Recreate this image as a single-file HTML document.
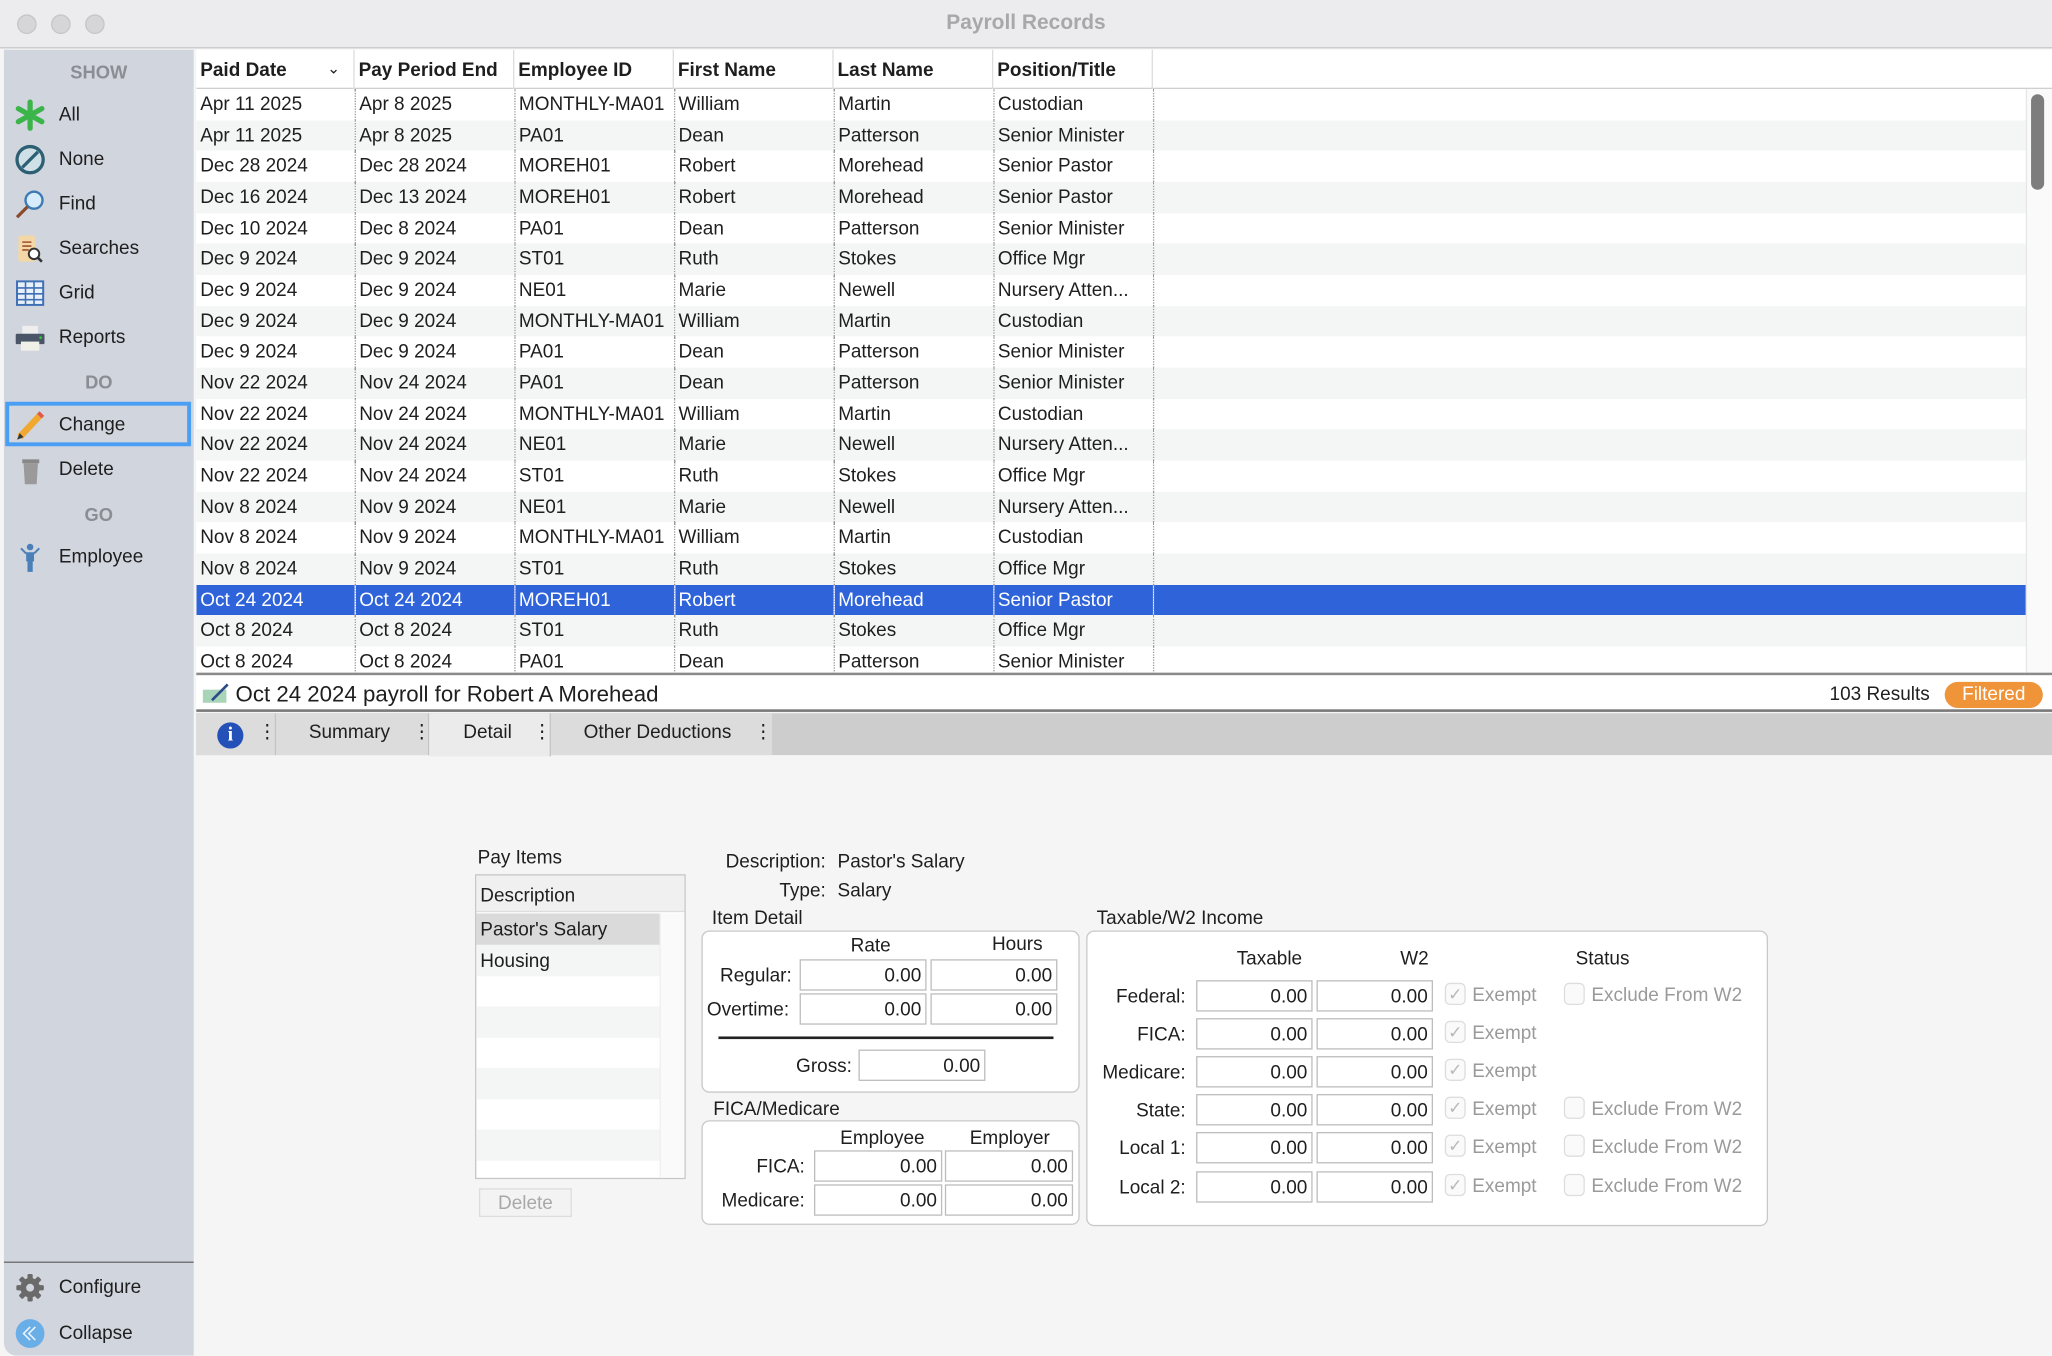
<!DOCTYPE html>
<html><head><meta charset="utf-8"><style>
*{box-sizing:border-box;margin:0;padding:0}
html,body{width:2052px;height:1356px;overflow:hidden;background:#fff}
#w{position:absolute;left:0;top:0;width:1568px;height:1036px;transform:scale(1.30867);transform-origin:0 0;font-family:"Liberation Sans",sans-serif;font-size:14.5px;color:#1e1e1e;background:#f5f5f5;overflow:hidden}
.a{position:absolute;white-space:nowrap}
#title{left:0;top:0;width:1568px;height:37px;background:#ecebee;border-bottom:1px solid #c8c8c8;text-align:center;line-height:36px;font-weight:bold;color:#a8a8a8;font-size:16px}
.dot{position:absolute;top:11px;width:15px;height:15px;border-radius:50%;background:#d6d5d8;border:1px solid #c6c5c8}
#side{left:3px;top:38px;width:145px;height:998px;background:#d1d5de;border-bottom-left-radius:10px}
.sh{position:absolute;width:145px;text-align:center;font-weight:bold;color:#8a8d94;font-size:14px;margin-top:1px}
.si{position:absolute;left:42px;font-size:14.5px;color:#1e1e1e;margin-top:1px}
.ic{position:absolute;left:8px;width:24px;height:24px}
#grid{left:150px;top:38px;width:1418px;height:477px;background:#fff;overflow:hidden}
table{border-collapse:collapse;table-layout:fixed;position:absolute;left:0;top:30px}
td{height:23.65px;padding:2px 3px 0;overflow:hidden;white-space:nowrap;border-right:1px dotted #999;line-height:21.65px}
tr:nth-child(even) td{background:#f4f5f5}
tr.sel td{background:#2f63d9;color:#fff;border-right-color:#8fa9ea}
tr td:last-child{border-right:none}
.hd{position:absolute;top:0;height:30px;line-height:33px;font-weight:bold;padding-left:3px;border-right:1px solid #ddd}
.box{position:absolute;border:1px solid #c9c9c9;border-radius:6px;background:#fff}
.f{position:absolute;height:24px;border:1px solid #bdbdbd;background:#fff;text-align:right;padding-right:3px;line-height:24px}
.r{position:absolute;text-align:right}
.g{color:#9a9a9a}
.cb{position:absolute;width:16px;height:17px;border:1px solid #ddd;border-radius:4px;background:#fafafa;color:#b8b8b8;font-size:13px;line-height:15px;text-align:center}
</style></head><body><div id="w">
<div id="title" class="a">Payroll Records</div>
<div class="dot" style="left:13px"></div><div class="dot" style="left:39px"></div><div class="dot" style="left:65px"></div>

<div id="side" class="a">
<div class="sh" style="top:8px">SHOW</div>
<svg class="ic" style="top:38px" viewBox="0 0 24 24"><g stroke="#3bb54a" stroke-width="4" stroke-linecap="round"><line x1="12" y1="2" x2="12" y2="22"/><line x1="3" y1="7" x2="21" y2="17"/><line x1="3" y1="17" x2="21" y2="7"/></g></svg>
<div class="si" style="top:41px">All</div>
<svg class="ic" style="top:72px" viewBox="0 0 24 24"><circle cx="12" cy="12" r="10" fill="#cfe0e6" stroke="#2c5f73" stroke-width="2.5"/><line x1="6" y1="18" x2="18" y2="6" stroke="#2c5f73" stroke-width="2.5"/></svg>
<div class="si" style="top:75px">None</div>
<svg class="ic" style="top:106px" viewBox="0 0 24 24"><circle cx="15" cy="9" r="6.5" fill="#d6ecfa" stroke="#3d79b5" stroke-width="1.8"/><line x1="10" y1="14" x2="2" y2="22" stroke="#8a4b2d" stroke-width="2.5"/></svg>
<div class="si" style="top:109px">Find</div>
<svg class="ic" style="top:140px" viewBox="0 0 24 24"><rect x="3" y="2" width="13" height="20" rx="2" fill="#f3d7a6"/><g stroke="#a0522d" stroke-width="1.2"><line x1="6" y1="7" x2="13" y2="7"/><line x1="6" y1="10" x2="13" y2="10"/><line x1="6" y1="13" x2="11" y2="13"/></g><circle cx="15" cy="16" r="4" fill="#fff" stroke="#333" stroke-width="1.5"/><line x1="18" y1="19" x2="21" y2="22" stroke="#333" stroke-width="2"/></svg>
<div class="si" style="top:143px">Searches</div>
<svg class="ic" style="top:174px" viewBox="0 0 24 24"><rect x="2" y="3" width="20" height="18" fill="#e8f0fb" stroke="#3f6fb5" stroke-width="1.5"/><g stroke="#3f6fb5" stroke-width="1.2"><line x1="2" y1="8" x2="22" y2="8"/><line x1="2" y1="12.5" x2="22" y2="12.5"/><line x1="2" y1="17" x2="22" y2="17"/><line x1="8.5" y1="3" x2="8.5" y2="21"/><line x1="15" y1="3" x2="15" y2="21"/></g></svg>
<div class="si" style="top:177px">Grid</div>
<svg class="ic" style="top:208px" viewBox="0 0 24 24"><rect x="6" y="3" width="12" height="6" fill="#eee"/><rect x="1" y="9" width="22" height="8" rx="1" fill="#4a5668"/><rect x="5" y="15" width="14" height="7" fill="#f0f0e8"/><circle cx="20" cy="12" r="1" fill="#3c3"/></svg>
<div class="si" style="top:211px">Reports</div>
<div class="sh" style="top:245px">DO</div>
<div style="position:absolute;left:1px;top:269px;width:142px;height:34px;border:3px solid #4a9ff5"></div>
<svg class="ic" style="top:275px" viewBox="0 0 24 24"><line x1="4" y1="21" x2="19" y2="5" stroke="#f0a830" stroke-width="5"/><line x1="19" y1="5" x2="21" y2="3" stroke="#e05a4a" stroke-width="5"/><path d="M2 23l2-5 3 3z" fill="#333"/></svg>
<div class="si" style="top:278px">Change</div>
<svg class="ic" style="top:309px" viewBox="0 0 24 24"><rect x="6" y="4" width="13" height="3" fill="#888"/><path d="M7 7h11l-1 16h-9z" fill="#9a9a9a"/></svg>
<div class="si" style="top:312px">Delete</div>
<div class="sh" style="top:346px">GO</div>
<svg class="ic" style="top:376px" viewBox="0 0 24 24"><circle cx="12" cy="4" r="2.5" fill="#4a7fb8"/><path d="M9 8h6v7h-1v8h-4v-8h-1z" fill="#4a7fb8"/><line x1="5" y1="5" x2="9" y2="9" stroke="#4a7fb8" stroke-width="1.5"/><line x1="19" y1="5" x2="15" y2="9" stroke="#4a7fb8" stroke-width="1.5"/></svg>
<div class="si" style="top:379px">Employee</div>
<div style="position:absolute;left:0;top:926px;width:145px;height:1px;background:#6b6b6b"></div>
<svg class="ic" style="top:934px" viewBox="0 0 24 24"><g fill="#6a6a6a"><circle cx="12" cy="12" r="7.5"/><rect x="10" y="1.5" width="4" height="21" rx="1"/><rect x="1.5" y="10" width="21" height="4" rx="1"/><rect x="10" y="1.5" width="4" height="21" rx="1" transform="rotate(45 12 12)"/><rect x="10" y="1.5" width="4" height="21" rx="1" transform="rotate(-45 12 12)"/></g><circle cx="12" cy="12" r="3" fill="#d1d5de"/></svg>
<div class="si" style="top:937px">Configure</div>
<svg class="ic" style="top:969px" viewBox="0 0 24 24"><circle cx="12" cy="12" r="11" fill="#6aaee8"/><path d="M12 7l-5 5 5 5M16 7l-5 5 5 5" fill="none" stroke="#e8f3fc" stroke-width="1.2"/></svg>
<div class="si" style="top:972px">Collapse</div>
</div>

<div id="grid" class="a">
<div class="a" style="left:0;top:0;width:1418px;height:30px;background:#fff;border-bottom:1px solid #cfcfcf"></div>
<div class="hd" style="left:0;width:121px">Paid Date<span style="position:absolute;left:100px;top:-2px;font-weight:normal;font-size:12px">&#8964;</span></div>
<div class="hd" style="left:121px;width:122px">Pay Period End</div>
<div class="hd" style="left:243px;width:122px">Employee ID</div>
<div class="hd" style="left:365px;width:122px">First Name</div>
<div class="hd" style="left:487px;width:122px">Last Name</div>
<div class="hd" style="left:609px;width:122px">Position/Title</div>
<table style="width:1398px">
<colgroup><col style="width:121px"><col style="width:122px"><col style="width:122px"><col style="width:122px"><col style="width:122px"><col style="width:122px"><col></colgroup>
<tr><td>Apr 11 2025</td><td>Apr 8 2025</td><td>MONTHLY-MA01</td><td>William</td><td>Martin</td><td>Custodian</td><td></td></tr>
<tr><td>Apr 11 2025</td><td>Apr 8 2025</td><td>PA01</td><td>Dean</td><td>Patterson</td><td>Senior Minister</td><td></td></tr>
<tr><td>Dec 28 2024</td><td>Dec 28 2024</td><td>MOREH01</td><td>Robert</td><td>Morehead</td><td>Senior Pastor</td><td></td></tr>
<tr><td>Dec 16 2024</td><td>Dec 13 2024</td><td>MOREH01</td><td>Robert</td><td>Morehead</td><td>Senior Pastor</td><td></td></tr>
<tr><td>Dec 10 2024</td><td>Dec 8 2024</td><td>PA01</td><td>Dean</td><td>Patterson</td><td>Senior Minister</td><td></td></tr>
<tr><td>Dec 9 2024</td><td>Dec 9 2024</td><td>ST01</td><td>Ruth</td><td>Stokes</td><td>Office Mgr</td><td></td></tr>
<tr><td>Dec 9 2024</td><td>Dec 9 2024</td><td>NE01</td><td>Marie</td><td>Newell</td><td>Nursery Atten...</td><td></td></tr>
<tr><td>Dec 9 2024</td><td>Dec 9 2024</td><td>MONTHLY-MA01</td><td>William</td><td>Martin</td><td>Custodian</td><td></td></tr>
<tr><td>Dec 9 2024</td><td>Dec 9 2024</td><td>PA01</td><td>Dean</td><td>Patterson</td><td>Senior Minister</td><td></td></tr>
<tr><td>Nov 22 2024</td><td>Nov 24 2024</td><td>PA01</td><td>Dean</td><td>Patterson</td><td>Senior Minister</td><td></td></tr>
<tr><td>Nov 22 2024</td><td>Nov 24 2024</td><td>MONTHLY-MA01</td><td>William</td><td>Martin</td><td>Custodian</td><td></td></tr>
<tr><td>Nov 22 2024</td><td>Nov 24 2024</td><td>NE01</td><td>Marie</td><td>Newell</td><td>Nursery Atten...</td><td></td></tr>
<tr><td>Nov 22 2024</td><td>Nov 24 2024</td><td>ST01</td><td>Ruth</td><td>Stokes</td><td>Office Mgr</td><td></td></tr>
<tr><td>Nov 8 2024</td><td>Nov 9 2024</td><td>NE01</td><td>Marie</td><td>Newell</td><td>Nursery Atten...</td><td></td></tr>
<tr><td>Nov 8 2024</td><td>Nov 9 2024</td><td>MONTHLY-MA01</td><td>William</td><td>Martin</td><td>Custodian</td><td></td></tr>
<tr><td>Nov 8 2024</td><td>Nov 9 2024</td><td>ST01</td><td>Ruth</td><td>Stokes</td><td>Office Mgr</td><td></td></tr>
<tr class="sel"><td>Oct 24 2024</td><td>Oct 24 2024</td><td>MOREH01</td><td>Robert</td><td>Morehead</td><td>Senior Pastor</td><td></td></tr>
<tr><td>Oct 8 2024</td><td>Oct 8 2024</td><td>ST01</td><td>Ruth</td><td>Stokes</td><td>Office Mgr</td><td></td></tr>
<tr><td>Oct 8 2024</td><td>Oct 8 2024</td><td>PA01</td><td>Dean</td><td>Patterson</td><td>Senior Minister</td><td></td></tr>
</table>
<div class="a" style="left:1398px;top:30px;width:20px;height:447px;background:#fafafa;border-left:1px solid #e6e6e6"></div>
<div class="a" style="left:1402px;top:34px;width:10px;height:73px;border-radius:5px;background:#7d7d7d"></div>
</div>
<div class="a" style="left:150px;top:514px;width:1418px;height:2px;background:#8a8a8a"></div>
<div class="a" style="left:150px;top:516px;width:1418px;height:28px;background:#fff;border-bottom:2px solid #7a7a7a"></div>
<svg class="a" style="left:154px;top:521px" width="22" height="18" viewBox="0 0 22 18"><rect x="1" y="6" width="18" height="10" fill="#a8d4b8"/><line x1="8" y1="14" x2="20" y2="2" stroke="#2b4a8a" stroke-width="2"/></svg>
<div class="a" style="left:180px;top:521px;font-size:17px">Oct 24 2024 payroll for Robert A Morehead</div>
<div class="a" style="left:1398px;top:523px;font-size:14.5px">103 Results</div>
<div class="a" style="left:1486px;top:521px;width:75px;height:20px;border-radius:10px;background:#f0943a;color:#fff;text-align:center;line-height:21px;font-size:14.5px">Filtered</div>

<div class="a" style="left:150px;top:545px;width:1418px;height:32px;background:#cdcdcd"></div>
<div class="a" style="left:150px;top:545px;width:61px;height:32px;background:#dcdcdc;border-right:1px solid #c4c4c4"></div>
<div class="a" style="left:166px;top:552px;width:20px;height:20px;border-radius:50%;background:#2451b8;color:#fff;font-weight:bold;text-align:center;line-height:20px;font-family:'Liberation Serif',serif;font-size:15px">i</div>
<div class="a" style="left:197px;top:552px">⋮</div>
<div class="a" style="left:211px;top:545px;width:117px;height:32px;background:#dcdcdc;border-right:1px solid #c4c4c4"></div>
<div class="a" style="left:236px;top:552px">Summary</div><div class="a" style="left:315px;top:552px">⋮</div>
<div class="a" style="left:328px;top:545px;width:93px;height:33px;background:#ebebeb;border-right:1px solid #c4c4c4"></div>
<div class="a" style="left:354px;top:552px">Detail</div><div class="a" style="left:407px;top:552px">⋮</div>
<div class="a" style="left:421px;top:545px;width:169px;height:32px;background:#dcdcdc"></div>
<div class="a" style="left:446px;top:552px">Other Deductions</div><div class="a" style="left:576px;top:552px">⋮</div>

<div class="a" style="left:365px;top:648px">Pay Items</div>
<div class="a" style="left:363px;top:668px;width:161px;height:233px;border:1px solid #c6c6c6;background:#fff"></div>
<div class="a" style="left:364px;top:669px;width:159px;height:28px;background:#f0f0f0;border-bottom:1px solid #ddd"></div>
<div class="a" style="left:367px;top:677px">Description</div>
<div class="a" style="left:364px;top:698px;width:140px;height:23.5px;background:#dadada"></div>
<div class="a" style="left:367px;top:703px">Pastor's Salary</div>
<div class="a" style="left:364px;top:722px;width:140px;height:23.5px;background:#f4f5f5"></div>
<div class="a" style="left:367px;top:727px">Housing</div>
<div class="a" style="left:364px;top:769px;width:140px;height:23.5px;background:#f4f5f5"></div>
<div class="a" style="left:364px;top:816px;width:140px;height:23.5px;background:#f4f5f5"></div>
<div class="a" style="left:364px;top:863px;width:140px;height:23.5px;background:#f4f5f5"></div>
<div class="a" style="left:504px;top:698px;width:19px;height:202px;background:#fafafa;border-left:1px solid #eee"></div>
<div class="a" style="left:366px;top:908px;width:71px;height:22px;border:1px solid #ddd;background:#f3f3f3;color:#a8a8a8;text-align:center;line-height:22px">Delete</div>

<div class="r" style="left:500px;width:131px;top:651px">Description:</div>
<div class="a" style="left:640px;top:651px">Pastor's Salary</div>
<div class="r" style="left:500px;width:131px;top:673px">Type:</div>
<div class="a" style="left:640px;top:673px">Salary</div>

<div class="a" style="left:544px;top:694px">Item Detail</div>
<div class="box" style="left:536px;top:711px;width:289px;height:124px"></div>
<div class="a" style="left:650px;top:715px">Rate</div>
<div class="a" style="left:758px;top:714px">Hours</div>
<div class="r" style="left:520px;width:85px;top:738px">Regular:</div>
<div class="f" style="left:611px;top:733px;width:97px">0.00</div>
<div class="f" style="left:711px;top:733px;width:97px">0.00</div>
<div class="r" style="left:520px;width:83px;top:764px">Overtime:</div>
<div class="f" style="left:611px;top:759px;width:97px">0.00</div>
<div class="f" style="left:711px;top:759px;width:97px">0.00</div>
<div class="a" style="left:549px;top:792px;width:256px;height:2px;background:#222"></div>
<div class="r" style="left:560px;width:91px;top:807px">Gross:</div>
<div class="f" style="left:656px;top:802px;width:97px">0.00</div>

<div class="a" style="left:545px;top:840px">FICA/Medicare</div>
<div class="box" style="left:536px;top:856px;width:289px;height:80px"></div>
<div class="a" style="left:642px;top:862px">Employee</div>
<div class="a" style="left:741px;top:862px">Employer</div>
<div class="r" style="left:520px;width:95px;top:884px">FICA:</div>
<div class="f" style="left:622px;top:879px;width:98px">0.00</div>
<div class="f" style="left:722px;top:879px;width:98px">0.00</div>
<div class="r" style="left:520px;width:95px;top:910px">Medicare:</div>
<div class="f" style="left:622px;top:905px;width:98px">0.00</div>
<div class="f" style="left:722px;top:905px;width:98px">0.00</div>

<div class="a" style="left:838px;top:694px">Taxable/W2 Income</div>
<div class="box" style="left:830px;top:711px;width:521px;height:226px"></div>
<div class="a" style="left:945px;top:725px">Taxable</div>
<div class="a" style="left:1070px;top:725px">W2</div>
<div class="a" style="left:1204px;top:725px">Status</div>

<div class="r" style="left:830px;width:76px;top:754px">Federal:</div>
<div class="f" style="left:914px;top:749px;width:89px">0.00</div><div class="f" style="left:1006px;top:749px;width:89px">0.00</div>
<div class="cb" style="left:1104px;top:751px">✓</div><div class="a g" style="left:1125px;top:753px">Exempt</div>
<div class="cb" style="left:1195px;top:751px"></div><div class="a g" style="left:1216px;top:753px">Exclude From W2</div>

<div class="r" style="left:830px;width:76px;top:783px">FICA:</div>
<div class="f" style="left:914px;top:778px;width:89px">0.00</div><div class="f" style="left:1006px;top:778px;width:89px">0.00</div>
<div class="cb" style="left:1104px;top:780px">✓</div><div class="a g" style="left:1125px;top:782px">Exempt</div>

<div class="r" style="left:830px;width:76px;top:812px">Medicare:</div>
<div class="f" style="left:914px;top:807px;width:89px">0.00</div><div class="f" style="left:1006px;top:807px;width:89px">0.00</div>
<div class="cb" style="left:1104px;top:809px">✓</div><div class="a g" style="left:1125px;top:811px">Exempt</div>

<div class="r" style="left:830px;width:76px;top:841px">State:</div>
<div class="f" style="left:914px;top:836px;width:89px">0.00</div><div class="f" style="left:1006px;top:836px;width:89px">0.00</div>
<div class="cb" style="left:1104px;top:838px">✓</div><div class="a g" style="left:1125px;top:840px">Exempt</div>
<div class="cb" style="left:1195px;top:838px"></div><div class="a g" style="left:1216px;top:840px">Exclude From W2</div>

<div class="r" style="left:830px;width:76px;top:870px">Local 1:</div>
<div class="f" style="left:914px;top:865px;width:89px">0.00</div><div class="f" style="left:1006px;top:865px;width:89px">0.00</div>
<div class="cb" style="left:1104px;top:867px">✓</div><div class="a g" style="left:1125px;top:869px">Exempt</div>
<div class="cb" style="left:1195px;top:867px"></div><div class="a g" style="left:1216px;top:869px">Exclude From W2</div>

<div class="r" style="left:830px;width:76px;top:900px">Local 2:</div>
<div class="f" style="left:914px;top:895px;width:89px">0.00</div><div class="f" style="left:1006px;top:895px;width:89px">0.00</div>
<div class="cb" style="left:1104px;top:897px">✓</div><div class="a g" style="left:1125px;top:899px">Exempt</div>
<div class="cb" style="left:1195px;top:897px"></div><div class="a g" style="left:1216px;top:899px">Exclude From W2</div>
</div></body></html>
